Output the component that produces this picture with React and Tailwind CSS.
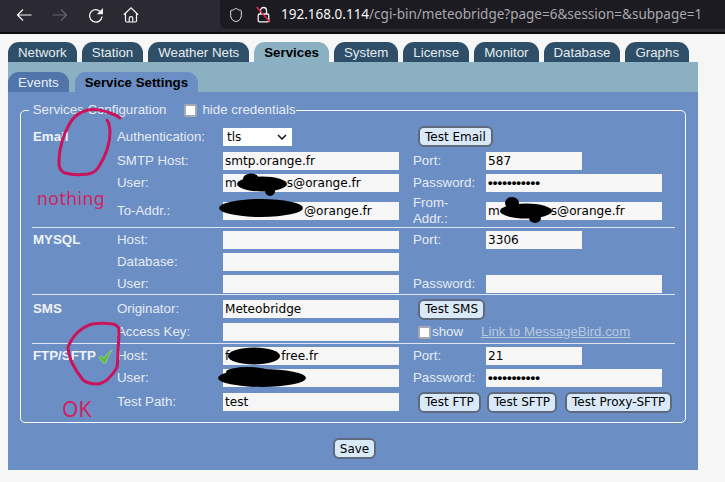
import React from "react";
import { Shield } from "lucide-react";

const sans = "font-['Liberation_Sans',Arial,sans-serif]";
const dejavu = "font-['DejaVu_Sans',sans-serif]";

function Tab({ children, active }) {
  return (
    <div className={`h-5 px-[10px] pt-px rounded-t-[11px] text-[13.3px] leading-5 flex items-center ${active ? "bg-[#8ab0c2] text-black font-bold" : "bg-[#2f4f68] text-[#e4ecf2]"}`}>
      {children}
    </div>
  );
}

function Field({ w = "w-[176px]", children }) {
  return <div className={`${w} h-[18px] bg-[#f6f6f6] text-black ${dejavu} text-[12.1px] leading-[18px] px-[2px] whitespace-nowrap overflow-hidden`}>{children}</div>;
}

function Btn({ children }) {
  return <button className={`h-[21px] px-[5px] rounded-[6px] border-2 border-[#5d6a7e] bg-[#d9e9f8] text-black ${dejavu} text-[12px] leading-[16px] whitespace-nowrap`}>{children}</button>;
}

function Row({ h, head, a, b, c, d }) {
  return (
    <div className={`${h} grid grid-cols-[84px_106px_190px_73px_1fr] items-center pl-3`}>
      <div className="font-bold text-[#eef2f8] whitespace-nowrap">{head}</div>
      <div>{a}</div>
      <div>{b}</div>
      <div className="leading-[16px]">{c}</div>
      <div>{d}</div>
    </div>
  );
}

function Sep({ m = "mb-[1px]" }) {
  return <div className={`h-px bg-[#dde6f2] ml-[11px] mr-[10px] ${m}`} />;
}

const Dots = () => <span className={`${sans} font-bold text-[13.5px]`}>•••••••••••</span>;

export default function App() {
  return (
    <div className={`relative w-[725px] h-[482px] overflow-hidden bg-[#f6f6f6] ${sans}`}>
      {/* browser toolbar */}
      <div className="h-[32px] bg-[#2b2a33] flex items-start">
        <div className="flex items-center text-[#f5f5f5] w-[220px] h-[29px] pl-[15px]">
          <svg width="18" height="18" viewBox="0 0 18 18" fill="none" stroke="currentColor" strokeWidth="1.2"><path d="M2.5 9h14M8 3.5 2.5 9 8 14.5" /></svg>
          <svg width="18" height="18" viewBox="0 0 18 18" fill="none" stroke="#66656d" strokeWidth="1.2" className="ml-[18px]"><path d="M1.5 9h14M10 3.5 15.5 9 10 14.5" /></svg>
          <svg width="16" height="16" viewBox="0 0 16 16" fill="none" className="ml-[19px]">
            <path d="M13.6 6.6A6.2 6.2 0 1 0 14 9.5" stroke="currentColor" strokeWidth="1.3" />
            <path d="M15 1v6.2H8.8z" fill="currentColor" />
          </svg>
          <svg width="16" height="16" viewBox="0 0 16 16" fill="none" stroke="currentColor" strokeWidth="1.2" className="ml-[19px]">
            <path d="M.8 7.8 8 .9l7.2 6.9M2.5 6.4v7.4c0 .8.4 1.2 1.2 1.2h8.6c.8 0 1.2-.4 1.2-1.2V6.4" />
            <path d="M6.2 15v-3.6c0-1 .8-1.7 1.8-1.7s1.8.7 1.8 1.7V15" />
          </svg>
        </div>
        <div className="flex-1 h-[29px] bg-[#1c1b22] flex items-center pl-[8px] rounded-bl-md">
          <Shield size={16} strokeWidth={1.4} className="text-[#f5f5f5]" />
          <svg width="15" height="17" viewBox="0 0 15 17" fill="none" className="ml-[12px]">
            <path d="M4.5 8V4.5a3 3 0 0 1 6 0V8" stroke="#f5f5f5" strokeWidth="1.3" />
            <rect x="2.2" y="8" width="10.6" height="7.8" rx="1.4" stroke="#f5f5f5" strokeWidth="1.3" />
            <path d="M.6 1 14 16" stroke="#e22850" strokeWidth="1.5" />
          </svg>
          <div className="ml-[10px] font-['Noto_Sans',sans-serif] text-[13.5px] whitespace-nowrap text-[#a9a8ad]"><span className="text-[#f5f5f5]">192.168.0.114</span>/cgi-bin/meteobridge?page=6&amp;session=&amp;subpage=1</div>
        </div>
      </div>
      <div className="h-[2px] bg-[#0c0c0d]" />

      {/* page */}
      <div className="pl-2 w-[698px] pt-[8px] text-[13.3px]">
        <div className="flex gap-[5px]">
          <Tab>Network</Tab><Tab>Station</Tab><Tab>Weather Nets</Tab><Tab active>Services</Tab><Tab>System</Tab><Tab>License</Tab><Tab>Monitor</Tab><Tab>Database</Tab><Tab>Graphs</Tab>
        </div>
        <div className="bg-[#8ab0c2] h-[30px] flex items-end gap-[6px]">
          <div className="h-5 px-[10px] pt-px rounded-t-[11px] bg-[#4f75aa] text-[#e8eef6] leading-5">Events</div>
          <div className="h-5 px-[10px] pt-px rounded-t-[11px] bg-[#6b8fc4] text-black font-bold leading-5">Service Settings</div>
        </div>
        <div className="bg-[#6b8fc4] h-[378px] pt-[10px] px-3 text-[#e6ebf3]">
          <fieldset className="border border-white rounded-[5px] h-[321px] pt-[6px] block min-w-0">
            <legend className="ml-[8px] px-0 h-[16px] leading-[16px] flex items-center">
              <span>&nbsp;Services Configuration</span>
              <span className="ml-[18px] w-[13px] h-[13px] bg-white rounded-[2px] border-2 border-[#a4a9b3] box-border" />
              <span className="ml-[5px]">hide credentials</span>
            </legend>
            <Row h="h-[25px]" head="Email" a="Authentication:" b={<div className={`w-[69px] h-[18px] bg-white text-black ${dejavu} text-[12.1px] leading-[18px] pl-[4px] flex items-center justify-between pr-[5px]`}>tls<svg width="10" height="6" viewBox="0 0 10 6" fill="none"><path d="M1 1l4 4 4-4" stroke="#111" strokeWidth="1.5" /></svg></div>} c={<div className="ml-[5px]"><Btn>Test Email</Btn></div>} />
            <Row h="h-[23px]" a="SMTP Host:" b={<Field>smtp.orange.fr</Field>} c="Port:" d={<Field w="w-[96px]">587</Field>} />
            <Row h="h-[22px]" a="User:" b={<Field>m<span className="inline-block w-[50px]" />s@orange.fr</Field>} c="Password:" d={<Field><Dots /></Field>} />
            <Row h="h-[33px]" a="To-Addr.:" b={<Field><span className="inline-block w-[79px]" />@orange.fr</Field>} c={<div className="w-[60px]">From-Addr.:</div>} d={<Field>m<span className="inline-block w-[51px]" />s@orange.fr</Field>} />
            <Sep />
            <Row h="h-[22px]" head="MYSQL" a="Host:" b={<Field />} c="Port:" d={<Field w="w-[96px]">3306</Field>} />
            <Row h="h-[22px]" a="Database:" b={<Field />} />
            <Row h="h-[21px]" a="User:" b={<Field />} c="Password:" d={<Field />} />
            <Sep m="mb-[2px]" />
            <Row h="h-[24px]" head="SMS" a="Originator:" b={<Field>Meteobridge</Field>} c={<div className="ml-[5px]"><Btn>Test SMS</Btn></div>} />
            <Row h="h-[22px]" a="Access Key:" b={<Field />} c={
              <div className="flex items-center whitespace-nowrap w-[240px] leading-[18px]">
                <span className="ml-[5px] w-[13px] h-[13px] bg-white rounded-[2px] border-2 border-[#a4a9b3] box-border" />
                <span className="ml-[1px]">show</span>
                <span className="ml-[18px] underline text-[#b9c9e0]">Link to MessageBird.com</span>
              </div>
            } />
            <Sep />
            <Row h="h-[22px]" head={<span className="flex items-center">FTP/SFTP
              <svg width="15" height="15" viewBox="0 0 15 15" className="ml-[2px]"><path d="M.8 8.5 3.6 6.6 6 9.2C8 5.6 10.5 2.8 14.5.8 11.8 4.5 9.5 9 7.8 14H5z" fill="#5fbf3f" stroke="#b7d8a8" strokeWidth=".5" /></svg></span>} a="Host:" b={<Field>f<span className="inline-block w-[52px]" />free.fr</Field>} c="Port:" d={<Field w="w-[96px]">21</Field>} />
            <Row h="h-[22px]" a="User:" b={<Field />} c="Password:" d={<Field><Dots /></Field>} />
            <Row h="h-[26px]" a="Test Path:" b={<Field>test</Field>} c={
              <div className="flex ml-[5px]"><Btn>Test FTP</Btn><div className="w-[6px] shrink-0" /><Btn>Test SFTP</Btn><div className="w-[8px] shrink-0" /><Btn>Test Proxy-SFTP</Btn></div>
            } />
          </fieldset>
          <div className="flex justify-center mt-[15px] pl-[3px]"><Btn>Save</Btn></div>
        </div>
      </div>

      {/* hand drawn annotations */}
      <svg width="725" height="482" viewBox="0 0 725 482" fill="none" className="absolute left-0 top-0 pointer-events-none">
        <g fill="#000">
          <ellipse cx="262" cy="184" rx="25" ry="7.5" />
          <ellipse cx="251" cy="179" rx="8" ry="5.5" />
          <ellipse cx="270" cy="191" rx="5" ry="5" />
          <ellipse cx="261" cy="208" rx="42" ry="9" />
          <ellipse cx="526" cy="211" rx="26" ry="7.5" />
          <ellipse cx="512" cy="203" rx="7" ry="6" />
          <ellipse cx="535" cy="218" rx="6" ry="5" />
          <ellipse cx="254" cy="356" rx="26" ry="8.5" />
          <ellipse cx="262" cy="378" rx="44" ry="9" />
          <ellipse cx="248" cy="372" rx="22" ry="5" />
        </g>
        <g stroke="#c9145c" strokeWidth="3" strokeLinejoin="round" strokeLinecap="round">
          <path d="M120 118C116 115 113 114 110 113C102 110 94 109 88 110C80 112 75 116 72 120C69 124 67 129 65 133C62 140 61 145 60 150C59 156 59 161 59 165C60 170 62 172 65 173C72 175 81 175 88 174C93 173 96 171 98 168C102 162 105 156 107 150C109 144 110 139 110 133C110 127 109 123 107 120" />
          <path d="M118 327C116 325 115 324 113 324C106 323 98 323 92 324C86 326 81 329 77 333C73 337 70 342 68 347C68 353 70 358 72 363C75 369 79 375 83 380C87 383 92 384 97 384C101 384 104 382 107 380C111 376 115 372 117 367C118 361 118 354 118 348C119 341 119 334 119 328" />
        </g>
      </svg>
      <div className="absolute left-[37px] top-[187px] text-[17.5px] leading-[22px] tracking-[0.5px] text-[#d3215f] font-['Noto_Sans',sans-serif]">nothing</div>
      <div className="absolute left-[62px] top-[397px] text-[21px] leading-[24px] text-[#d3215f] font-['Noto_Sans',sans-serif]">OK</div>
    </div>
  );
}
